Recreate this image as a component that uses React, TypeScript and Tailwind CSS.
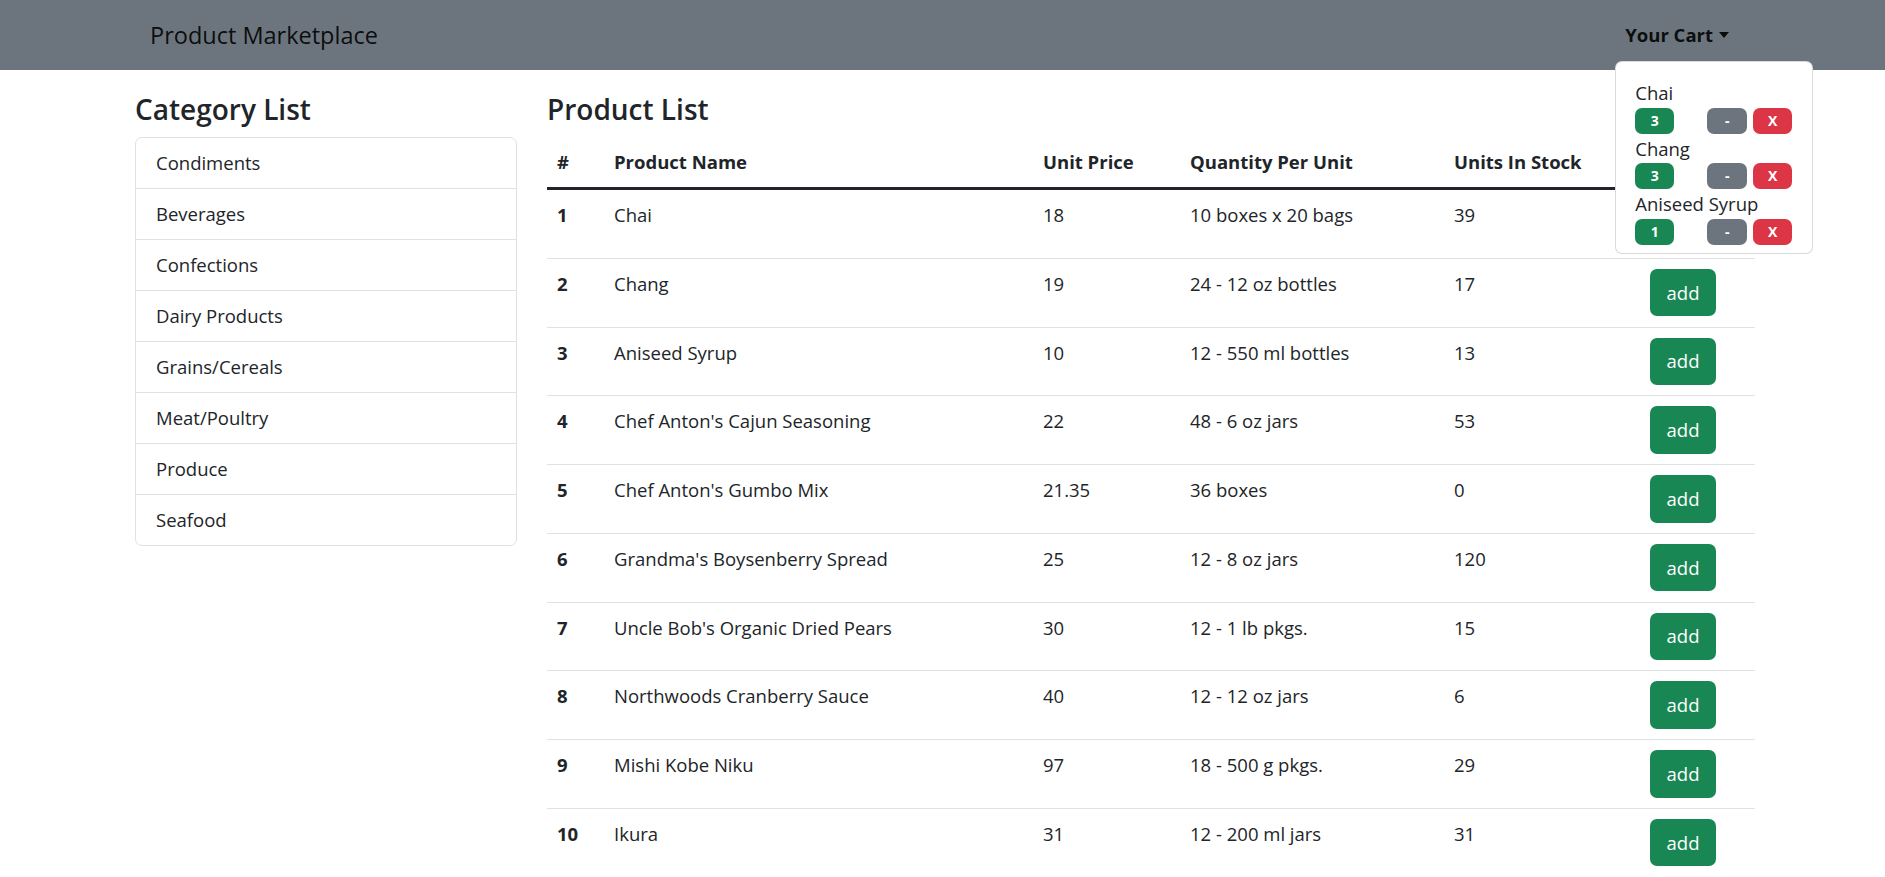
import React from 'react';

interface Product {
  id: number;
  name: string;
  price: string;
  qty: string;
  stock: number;
}

const categories = [
  'Condiments',
  'Beverages',
  'Confections',
  'Dairy Products',
  'Grains/Cereals',
  'Meat/Poultry',
  'Produce',
  'Seafood',
];

const products: Product[] = [
  { id: 1, name: 'Chai', price: '18', qty: '10 boxes x 20 bags', stock: 39 },
  { id: 2, name: 'Chang', price: '19', qty: '24 - 12 oz bottles', stock: 17 },
  { id: 3, name: 'Aniseed Syrup', price: '10', qty: '12 - 550 ml bottles', stock: 13 },
  { id: 4, name: "Chef Anton's Cajun Seasoning", price: '22', qty: '48 - 6 oz jars', stock: 53 },
  { id: 5, name: "Chef Anton's Gumbo Mix", price: '21.35', qty: '36 boxes', stock: 0 },
  { id: 6, name: "Grandma's Boysenberry Spread", price: '25', qty: '12 - 8 oz jars', stock: 120 },
  { id: 7, name: "Uncle Bob's Organic Dried Pears", price: '30', qty: '12 - 1 lb pkgs.', stock: 15 },
  { id: 8, name: 'Northwoods Cranberry Sauce', price: '40', qty: '12 - 12 oz jars', stock: 6 },
  { id: 9, name: 'Mishi Kobe Niku', price: '97', qty: '18 - 500 g pkgs.', stock: 29 },
  { id: 10, name: 'Ikura', price: '31', qty: '12 - 200 ml jars', stock: 31 },
];

const cart = [
  { name: 'Chai', count: 3 },
  { name: 'Chang', count: 3 },
  { name: 'Aniseed Syrup', count: 1 },
];

const CartDropdown: React.FC = () => (
  <div className="absolute left-0 top-[51px] z-10 w-[198px] rounded-[7px] border border-black/15 bg-white pt-[16px] pb-[8px] pl-[19px]">
    {cart.map((item) => (
      <div key={item.name}>
        <div className="text-[18.5px] leading-[30px] text-[#212529]">{item.name}</div>
        <div className="flex h-[25.5px] items-center">
          <span className="flex h-[26px] w-[39px] items-center justify-center rounded-[7px] bg-[#198754] text-[14px] font-bold leading-none text-white">
            {item.count}
          </span>
          <span className="ml-[33px] flex h-[26px] w-[40px] items-center justify-center rounded-[7px] bg-[#6c757d] text-[14px] font-bold leading-none text-white">
            -
          </span>
          <span className="ml-[6px] flex h-[26px] w-[39px] items-center justify-center rounded-[7px] bg-[#dc3545] text-[14px] font-bold leading-none text-white">
            X
          </span>
        </div>
      </div>
    ))}
  </div>
);

const cols = ['w-[57px]', 'w-[429px]', 'w-[147px]', 'w-[264px]', 'w-[196px]', 'w-[115px]'];

export default function App() {
  return (
    <div className="min-h-screen bg-white font-['Open_Sans','Liberation_Sans',sans-serif] text-[#212529]">
      {/* navbar */}
      <nav className="flex h-[70px] items-center justify-between bg-[#6c757d] pl-[150px] pr-[146px]">
        <span className="text-[23.5px] leading-[30px] text-black/90">Product Marketplace</span>
        <div className="relative flex h-[50px] items-center px-[10px]">
          <span className="text-[18.5px] font-bold leading-[30px] text-black/90">Your Cart</span>
          <span className="ml-[6px] inline-block h-0 w-0 border-x-[5px] border-t-[6px] border-x-transparent border-t-black/90" />
          <CartDropdown />
        </div>
      </nav>

      <div className="flex pl-[135px] pt-[21px]">
        {/* categories */}
        <div className="w-[382px]">
          <h4 className="mb-[10px] text-[28px] font-semibold leading-[36px]">Category List</h4>
          <div className="divide-y divide-[#dee2e6] rounded-[7px] border border-[#dee2e6]">
            {categories.map((c) => (
              <div key={c} className="px-[20px] py-[10px] text-[18.5px] leading-[30px]">
                {c}
              </div>
            ))}
          </div>
        </div>

        {/* products */}
        <div className="ml-[30px] w-[1208px]">
          <h4 className="mb-[10px] text-[28px] font-semibold leading-[36px]">Product List</h4>
          <div className="flex h-[53px] border-b-[3px] border-[#212529] text-[18.5px] font-bold leading-[30px]">
            <div className={`${cols[0]} px-[10px] pt-[10px]`}>#</div>
            <div className={`${cols[1]} px-[10px] pt-[10px]`}>Product Name</div>
            <div className={`${cols[2]} px-[10px] pt-[10px]`}>Unit Price</div>
            <div className={`${cols[3]} px-[10px] pt-[10px]`}>Quantity Per Unit</div>
            <div className={`${cols[4]} px-[10px] pt-[10px]`}>Units In Stock</div>
            <div className={`${cols[5]} px-[10px] pt-[10px]`} />
          </div>
          {products.map((p) => (
            <div key={p.id} className="flex h-[68.75px] border-b border-[#dee2e6] text-[18.5px] leading-[30px]">
              <div className={`${cols[0]} px-[10px] pt-[10px] font-bold`}>{p.id}</div>
              <div className={`${cols[1]} px-[10px] pt-[10px]`}>{p.name}</div>
              <div className={`${cols[2]} px-[10px] pt-[10px]`}>{p.price}</div>
              <div className={`${cols[3]} px-[10px] pt-[10px]`}>{p.qty}</div>
              <div className={`${cols[4]} px-[10px] pt-[10px]`}>{p.stock}</div>
              <div className={`${cols[5]} px-[10px] pt-[10px]`}>
                <button className="h-[47.5px] w-[66px] rounded-[7px] bg-[#198754] text-[18.5px] leading-[30px] text-white">
                  add
                </button>
              </div>
            </div>
          ))}
        </div>
      </div>
    </div>
  );
}
